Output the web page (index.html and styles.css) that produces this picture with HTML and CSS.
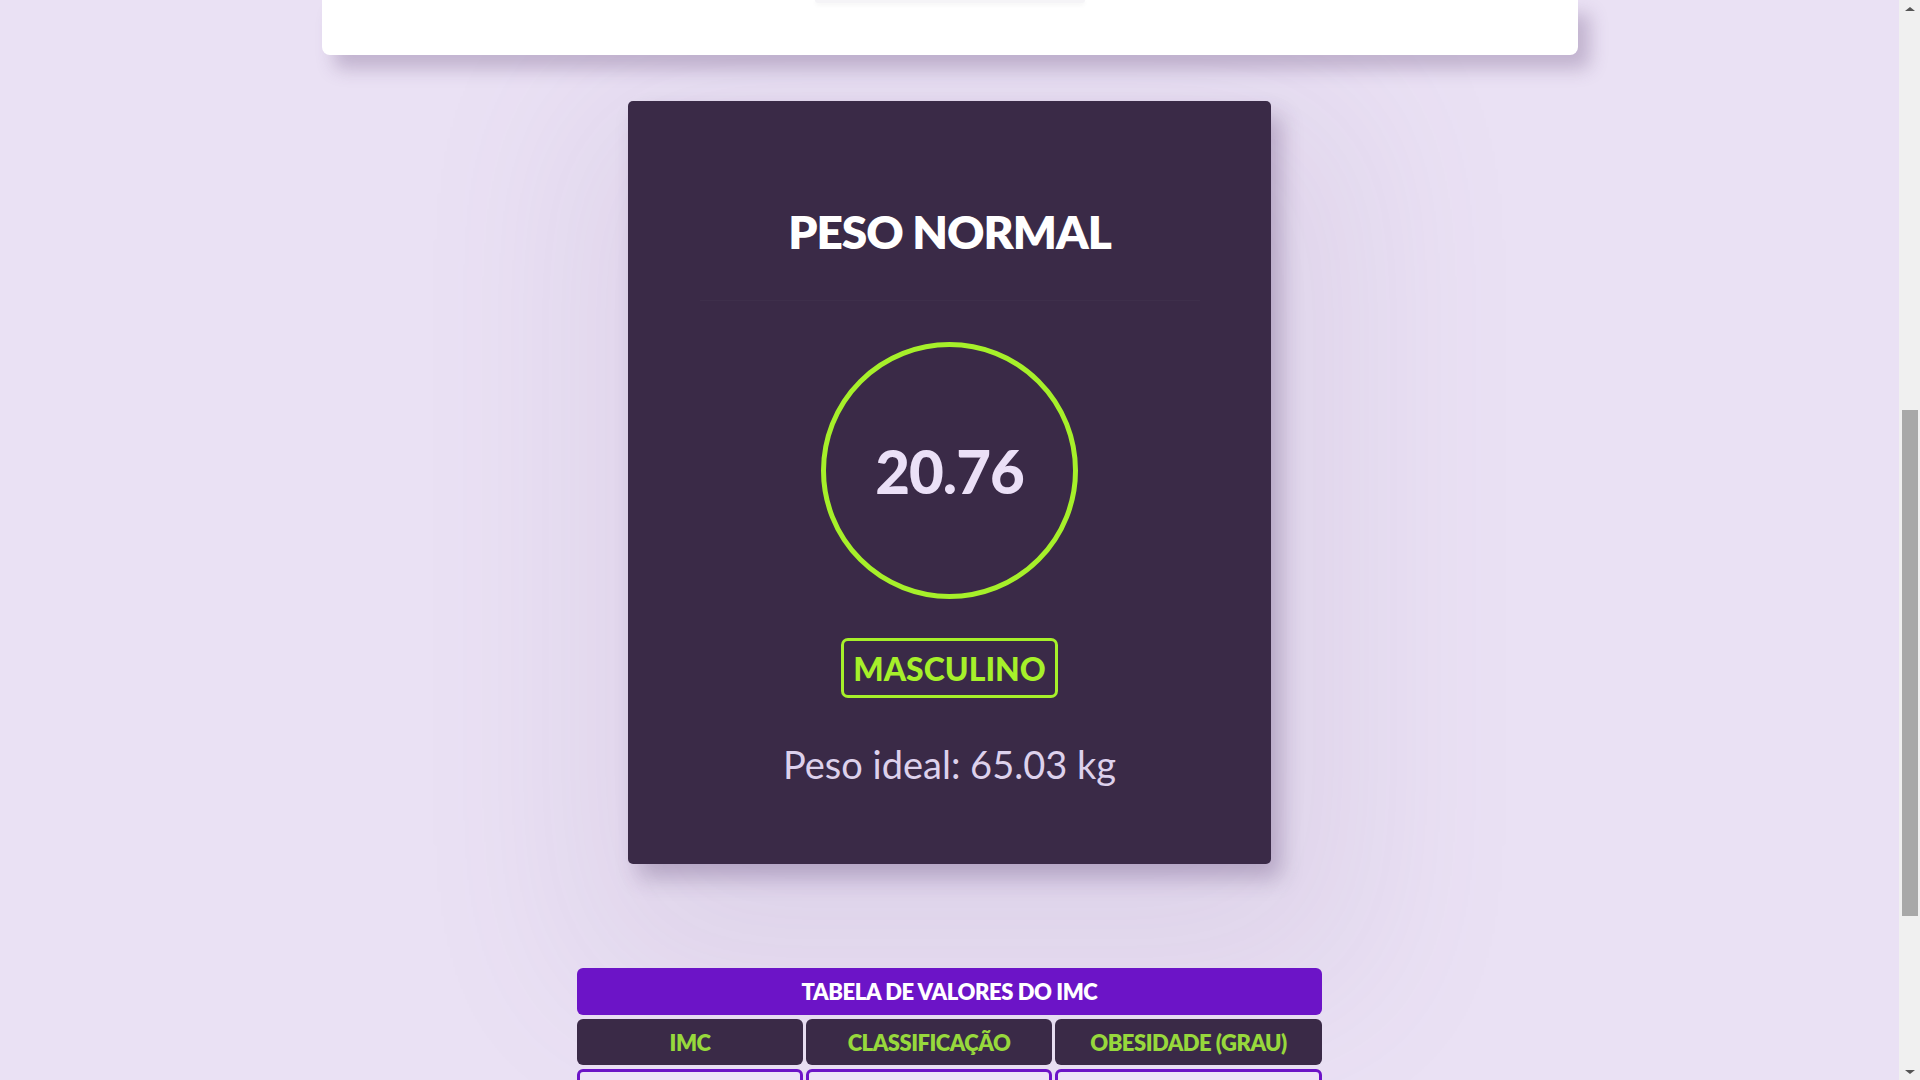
FILE: index.html
```html
<!DOCTYPE html>
<html lang="pt-BR">
<head>
<meta charset="utf-8">
<title>Calculadora de IMC</title>
<link rel="stylesheet" href="styles.css">
</head>
<body>
<div class="viewport">
  <main class="page">
    <section class="top-card">
      <div class="top-btn"></div>
    </section>

    <section class="result-card">
      <h2 class="result-title">PESO NORMAL</h2>
      <div class="divider"></div>
      <div class="imc-ring"><span class="imc-value">20.76</span></div>
      <div class="gender-badge">MASCULINO</div>
      <p class="ideal-weight">Peso ideal: 65.03 kg</p>
    </section>

    <section class="imc-table">
      <div class="table-caption">TABELA DE VALORES DO IMC</div>
      <div class="table-row head">
        <div class="cell">IMC</div>
        <div class="cell">CLASSIFICAÇÃO</div>
        <div class="cell">OBESIDADE (GRAU)</div>
      </div>
      <div class="table-row body">
        <div class="cell"></div>
        <div class="cell"></div>
        <div class="cell"></div>
      </div>
    </section>
  </main>

  <div class="scrollbar">
    <div class="sb-arrow up"></div>
    <div class="sb-track"><div class="sb-thumb"></div></div>
    <div class="sb-arrow down"></div>
  </div>
</div>
</body>
</html>
```

FILE: styles.css
```css
* { box-sizing: border-box; }

html, body {
  margin: 0;
  padding: 0;
  height: 100%;
  overflow: hidden;
}

body {
  font-family: Lato, "Noto Sans", sans-serif;
  background: #ebe2f5;
}

.viewport {
  display: flex;
  height: 100vh;
}

.page {
  flex: 1;
  display: flex;
  flex-direction: column;
  align-items: center;
  overflow: hidden;
  background: #eae1f4;
}

/* top white card (scrolled mostly out of view) */
.top-card {
  width: 1256px;
  height: 55px;
  flex: none;
  background: #ffffff;
  border-radius: 0 0 8px 8px;
  box-shadow: 12px 14px 18px rgba(90, 60, 110, 0.28);
  display: flex;
  justify-content: center;
  position: relative;
  z-index: 2;
}

.top-btn {
  width: 270px;
  height: 3px;
  background: #f5f4f7;
  border-radius: 0 0 6px 6px;
  box-shadow: 0 2px 4px rgba(0, 0, 0, 0.05);
}

/* result card */
.result-card {
  margin-top: 46px;
  width: 643px;
  height: 763px;
  flex: none;
  background: #3a2a47;
  border-radius: 5px;
  box-shadow: 10px 14px 22px rgba(70, 40, 95, 0.28), 20px 60px 180px 60px rgba(120, 85, 145, 0.10);
  display: flex;
  flex-direction: column;
  align-items: center;
  padding-top: 101px;
}

.result-title {
  margin: 0;
  font-size: 46px;
  line-height: 60px;
  font-weight: 800;
  color: #ffffff;
  letter-spacing: -1px;
}

.divider {
  margin-top: 38px;
  width: 500px;
  height: 1px;
  background: rgba(255, 255, 255, 0.025);
}

.imc-ring {
  margin-top: 41px;
  width: 257px;
  height: 257px;
  border: 5px solid #a6f02a;
  border-radius: 50%;
  display: flex;
  align-items: center;
  justify-content: center;
}

.imc-value {
  font-size: 60px;
  font-weight: 900;
  color: #ebe0f7;
  letter-spacing: -1px;
}

.gender-badge {
  margin-top: 39px;
  height: 60px;
  padding: 0 9px;
  border: 3px solid #a6f02a;
  border-radius: 7px;
  color: #a6f02a;
  font-size: 32px;
  font-weight: 900;
  display: flex;
  align-items: center;
}

.ideal-weight {
  margin: 44px 0 0;
  font-size: 38px;
  line-height: 44px;
  color: #ddd1ec;
}

/* table */
.imc-table {
  margin-top: 104px;
  width: 745px;
  flex: none;
  display: flex;
  flex-direction: column;
  gap: 4px;
}

.table-caption {
  height: 47px;
  background: #6c14c7;
  border-radius: 6px;
  color: #ffffff;
  font-size: 22px;
  font-weight: 800;
  letter-spacing: -0.4px;
  display: flex;
  align-items: center;
  justify-content: center;
}

.table-row {
  display: grid;
  grid-template-columns: 226px 246px 267px;
  gap: 3px;
}

.cell {
  height: 46px;
  border-radius: 6px;
  display: flex;
  align-items: center;
  justify-content: center;
  font-size: 22px;
  font-weight: 800;
  letter-spacing: -0.5px;
}

.head .cell {
  background: #3a2a47;
  color: #97d83c;
}

.body .cell {
  background: #ede3f7;
  border: 3px solid #6c14c7;
}

/* fake browser scrollbar */
.scrollbar {
  width: 21px;
  flex: none;
  background: #f0f0f0;
  display: flex;
  flex-direction: column;
}

.sb-arrow {
  height: 17px;
  flex: none;
  display: flex;
  align-items: center;
  justify-content: center;
}

.sb-arrow::before {
  content: "";
  border-left: 5px solid transparent;
  border-right: 5px solid transparent;
}

.sb-arrow.up::before { border-bottom: 4px solid #555555; }
.sb-arrow.down::before { border-top: 4px solid #555555; }

.sb-track {
  flex: 1;
  padding: 0 2px 0 3px;
}

.sb-thumb {
  margin-top: 393px;
  height: 506px;
  background: #a8a8a8;
}
```
